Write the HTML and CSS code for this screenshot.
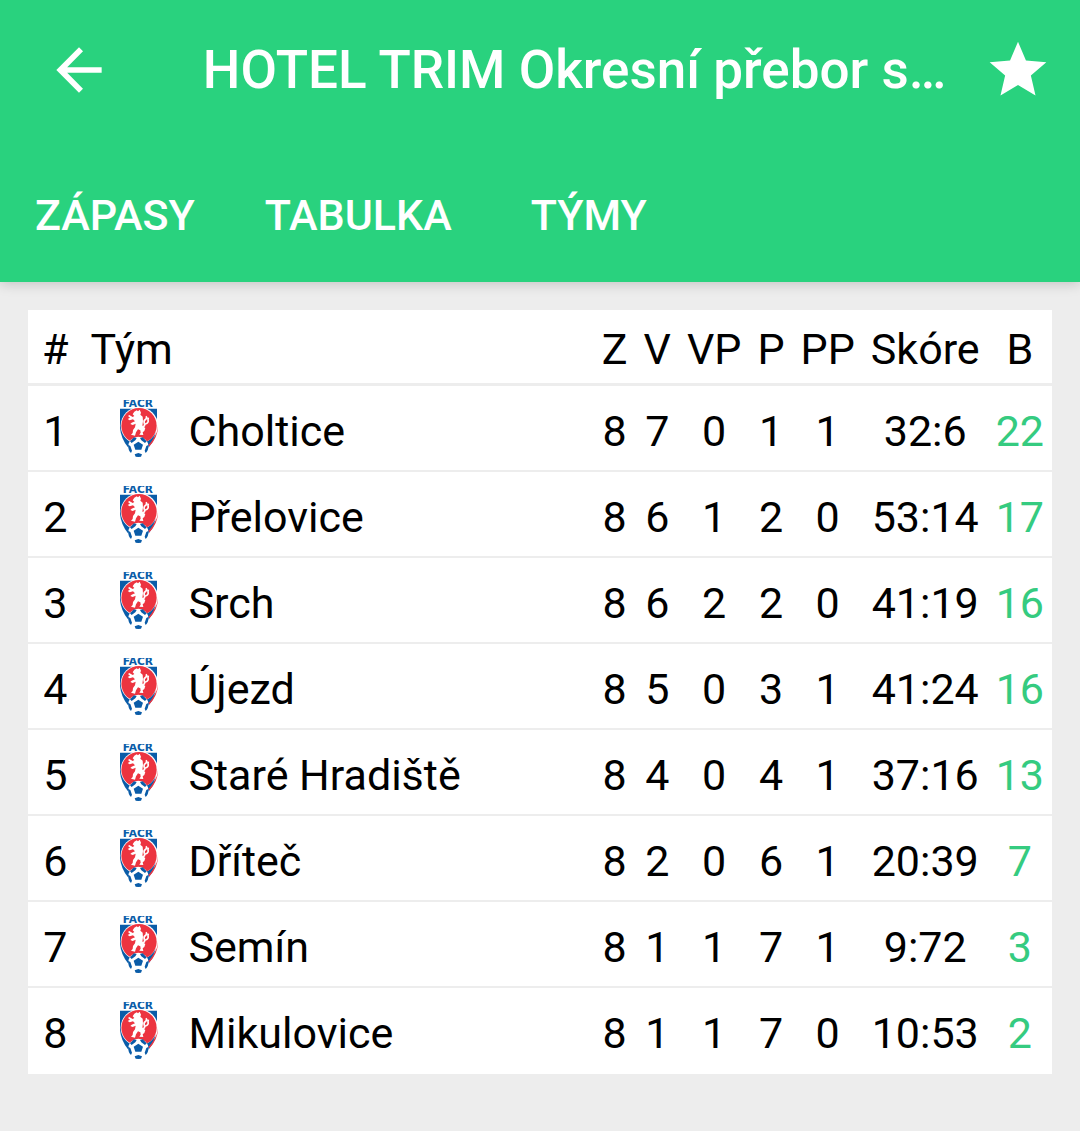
FILE: index.html
```html
<!DOCTYPE html>
<html lang="cs">

<head>
    <meta charset="UTF-8">
    <meta name="viewport" content="width=device-width, initial-scale=1.0">
    <title>Okresní přebor</title>
    <link rel="stylesheet" href="styles.css">
</head>

<body>
    <svg class="sprite" aria-hidden="true">
        <symbol id="crest" viewBox="0 0 114 171">
            <text class="crest-label" x="8" y="21">FACR</text>
            <path fill="#0a5ca8" d="M0 26H111V84Q108 116 86 142H24Q3 116 0 84Z" />
            <path fill="#ec3440" d="M114 74Q115 112 87 140L80 122Q100 106 108 78Z" />
            <circle cx="58" cy="77" r="56" fill="#fff" />
            <path fill="#0a5ca8" d="M72 128Q96 120 107 98Q102 118 86 134Z" />
            <circle cx="57" cy="77" r="53" fill="#ec3440" />
            <!-- lion -->
            <path fill="#fff" d="M43 35L50 31L54 34L59 29L63 38L61 44L68 50L69 64L67 78L76 84L73 93L68 97L70 105L58 104L62 98L61 91L54 88L48 97L45 107L33 104L38 99L39 90L45 82L47 71L38 75L31 72L35 68L45 64L39 58L29 61L23 57L30 53L24 48L28 45L38 51L43 48L38 43Z" />
            <path fill="none" stroke="#fff" stroke-width="5" d="M66 80Q77 79 73 70Q70 62 77 58Q82 54 78 49M76 72Q87 69 84 59L85 53" />
            <!-- ball -->
            <circle cx="55" cy="141" r="31" fill="#fff" />
            <path fill="#0a5ca8" d="M41 134L55 125L69 134L64 149H46ZM30 124L42 112L50 114L46 121L35 129ZM60 114L68 112L80 124L75 129L64 121ZM24 134L31 138L36 152L33 159Q24 150 24 134ZM86 134L79 138L74 152L77 159Q86 150 86 134ZM44 163L55 159L66 163L63 170L55 171L47 170Z" />
        </symbol>
    </svg>

    <header class="header">
        <div class="app-bar">
            <button class="icon-button" type="button" aria-label="Zpět">
                <svg class="icon" viewBox="0 0 24 24"><path d="M20 11H7.83l5.59-5.59L12 4l-8 8 8 8 1.41-1.41L7.83 13H20v-2z" /></svg>
            </button>
            <h1 class="title">HOTEL TRIM Okresní přebor s…</h1>
            <button class="icon-button" type="button" aria-label="Oblíbené">
                <svg class="icon" viewBox="0 0 24 24"><path d="M12 17.27L18.18 21l-1.64-7.03L22 9.24l-7.19-.61L12 2 9.19 8.63 2 9.24l5.46 4.73L5.82 21z" /></svg>
            </button>
        </div>
        <nav class="tabs">
            <a class="tab" href="#zapasy">ZÁPASY</a>
            <a class="tab" href="#tabulka">TABULKA</a>
            <a class="tab" href="#tymy">TÝMY</a>
        </nav>
    </header>

    <main class="content" id="tabulka">
        <table class="standings">
            <thead>
                <tr>
                    <th class="rank">#</th>
                    <th class="team" colspan="2">Tým</th>
                    <th>Z</th>
                    <th>V</th>
                    <th>VP</th>
                    <th>P</th>
                    <th>PP</th>
                    <th>Skóre</th>
                    <th>B</th>
                </tr>
            </thead>
            <tbody>
                <tr>
                    <td class="rank">1</td>
                    <td class="logo"><svg class="crest"><use href="#crest" /></svg></td>
                    <td class="team">Choltice</td>
                    <td>8</td><td>7</td><td>0</td><td>1</td><td>1</td><td>32:6</td>
                    <td class="points">22</td>
                </tr>
                <tr>
                    <td class="rank">2</td>
                    <td class="logo"><svg class="crest"><use href="#crest" /></svg></td>
                    <td class="team">Přelovice</td>
                    <td>8</td><td>6</td><td>1</td><td>2</td><td>0</td><td>53:14</td>
                    <td class="points">17</td>
                </tr>
                <tr>
                    <td class="rank">3</td>
                    <td class="logo"><svg class="crest"><use href="#crest" /></svg></td>
                    <td class="team">Srch</td>
                    <td>8</td><td>6</td><td>2</td><td>2</td><td>0</td><td>41:19</td>
                    <td class="points">16</td>
                </tr>
                <tr>
                    <td class="rank">4</td>
                    <td class="logo"><svg class="crest"><use href="#crest" /></svg></td>
                    <td class="team">Újezd</td>
                    <td>8</td><td>5</td><td>0</td><td>3</td><td>1</td><td>41:24</td>
                    <td class="points">16</td>
                </tr>
                <tr>
                    <td class="rank">5</td>
                    <td class="logo"><svg class="crest"><use href="#crest" /></svg></td>
                    <td class="team">Staré Hradiště</td>
                    <td>8</td><td>4</td><td>0</td><td>4</td><td>1</td><td>37:16</td>
                    <td class="points">13</td>
                </tr>
                <tr>
                    <td class="rank">6</td>
                    <td class="logo"><svg class="crest"><use href="#crest" /></svg></td>
                    <td class="team">Dříteč</td>
                    <td>8</td><td>2</td><td>0</td><td>6</td><td>1</td><td>20:39</td>
                    <td class="points">7</td>
                </tr>
                <tr>
                    <td class="rank">7</td>
                    <td class="logo"><svg class="crest"><use href="#crest" /></svg></td>
                    <td class="team">Semín</td>
                    <td>8</td><td>1</td><td>1</td><td>7</td><td>1</td><td>9:72</td>
                    <td class="points">3</td>
                </tr>
                <tr>
                    <td class="rank">8</td>
                    <td class="logo"><svg class="crest"><use href="#crest" /></svg></td>
                    <td class="team">Mikulovice</td>
                    <td>8</td><td>1</td><td>1</td><td>7</td><td>0</td><td>10:53</td>
                    <td class="points">2</td>
                </tr>
            </tbody>
        </table>
    </main>
</body>

</html>
```
FILE: styles.css
```css
* {
    box-sizing: border-box;
}

body {
    margin: 0;
    background: #ededed;
    color: #000;
    font-family: Roboto, sans-serif;
    font-size: 43px;
}

.sprite {
    display: none;
}

.header {
    background: #29d27e;
    color: #fff;
    box-shadow: 0 2px 12px rgba(0, 0, 0, 0.18);
}

.app-bar {
    display: flex;
    align-items: center;
    height: 139px;
    padding: 0 28px 0 45px;
}

.icon-button {
    flex: none;
    padding: 0;
    border: 0;
    background: none;
    color: inherit;
}

.icon {
    display: block;
    width: 68px;
    height: 68px;
    fill: currentColor;
}

.title {
    flex: 1;
    margin: 0;
    padding: 0 34px 0 86px;
    overflow: hidden;
    font-size: 53px;
    font-weight: 500;
    text-align: center;
    white-space: nowrap;
}

.tabs {
    display: flex;
    height: 143px;
    padding-top: 10px;
}

.tab {
    min-width: 204px;
    padding: 0 35px;
    color: inherit;
    font-weight: 500;
    line-height: 132px;
    text-align: center;
    text-decoration: none;
}

.content {
    padding: 28px;
}

.standings {
    width: 100%;
    background: #fff;
    border-collapse: separate;
    border-spacing: 0;
}

.standings th,
.standings td {
    height: 86px;
    padding: 6px 8px 0;
    border-bottom: 2px solid #ededed;
    font-weight: 400;
    line-height: 50px;
    text-align: center;
    white-space: nowrap;
}

.standings th {
    height: 76px;
    padding-top: 4px;
    border-bottom-width: 3px;
}

.standings tr:last-child td {
    border-bottom-color: #fff;
}

.standings .rank {
    padding-right: 22px;
    padding-left: 14px;
}

.standings .team {
    width: 100%;
    padding-left: 0;
    text-align: left;
}

.standings .logo {
    padding: 0 30px;
}

.standings .points {
    color: #35cb80;
}

.crest {
    display: block;
    width: 38px;
    height: 57px;
    overflow: visible;
}

.crest-label {
    fill: #0a5ca8;
    font-family: "DejaVu Sans", sans-serif;
    font-size: 32px;
    font-weight: 700;
}
```
